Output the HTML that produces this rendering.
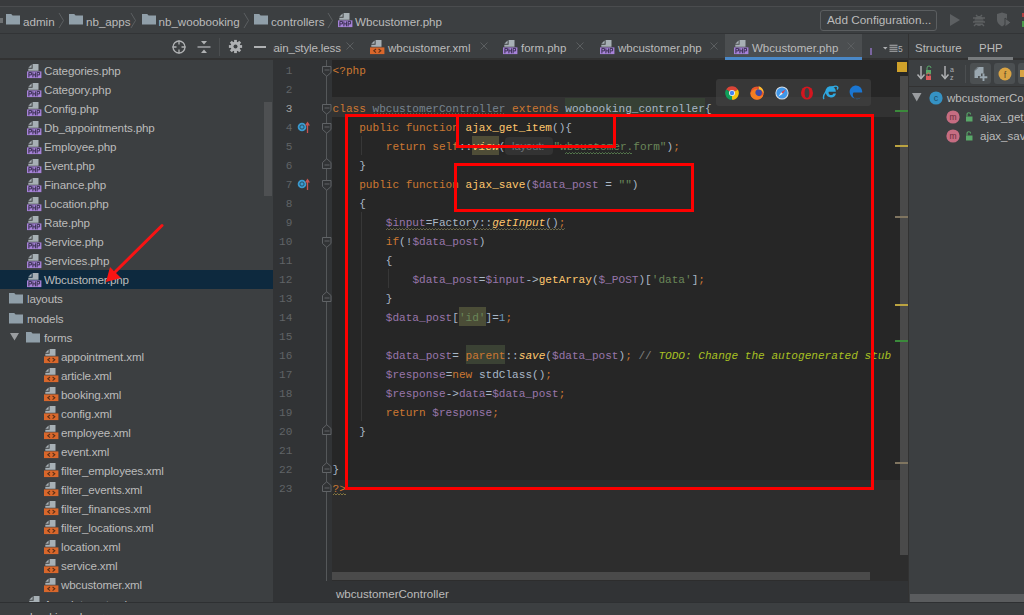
<!DOCTYPE html><html><head><meta charset="utf-8"><style>
html,body{margin:0;padding:0;}body{width:1024px;height:615px;overflow:hidden;position:relative;background:#3c3f41;font-family:"Liberation Sans",sans-serif;}
.r{position:absolute;}
.t{position:absolute;white-space:pre;line-height:19px;height:19px;}
</style></head><body>
<div class="r" style="left:0;top:0;width:1024px;height:6px;background:#393b3d"></div>
<div class="r" style="left:0;top:6px;width:1024px;height:1px;background:#4a4c4e"></div>
<div class="r" style="left:0;top:7px;width:1024px;height:26px;background:#3c3f41"></div>
<div class="r" style="left:0;top:33px;width:1024px;height:1px;background:#323436"></div>
<div class="r" style="left:0;top:18px;width:3px;height:5px;background:#6d7072"></div>
<svg style="position:absolute;left:5.5px;top:14px" width="14" height="12" viewBox="0 0 14 12"><path d="M0 0h5.2l1.4 1.4h7.4v9.1h-14z" fill="#909fa9"/></svg>
<div class="t" style="left:23px;top:12px;font-size:11.6px;color:#bbbbbb">admin</div>
<svg class="r" style="left:58px;top:12px" width="7" height="17" viewBox="0 0 7 17"><path d="M1 1l4.5 7.5l-4.5 7.5" stroke="#5f6264" stroke-width="0.9" fill="none"/></svg>
<svg style="position:absolute;left:68.5px;top:14px" width="14" height="12" viewBox="0 0 14 12"><path d="M0 0h5.2l1.4 1.4h7.4v9.1h-14z" fill="#909fa9"/></svg>
<div class="t" style="left:86px;top:12px;font-size:11.6px;color:#bbbbbb">nb_apps</div>
<svg class="r" style="left:130px;top:12px" width="7" height="17" viewBox="0 0 7 17"><path d="M1 1l4.5 7.5l-4.5 7.5" stroke="#5f6264" stroke-width="0.9" fill="none"/></svg>
<svg style="position:absolute;left:141.5px;top:14px" width="14" height="12" viewBox="0 0 14 12"><path d="M0 0h5.2l1.4 1.4h7.4v9.1h-14z" fill="#909fa9"/></svg>
<div class="t" style="left:158.5px;top:12px;font-size:11.6px;color:#bbbbbb">nb_woobooking</div>
<svg class="r" style="left:243px;top:12px" width="7" height="17" viewBox="0 0 7 17"><path d="M1 1l4.5 7.5l-4.5 7.5" stroke="#5f6264" stroke-width="0.9" fill="none"/></svg>
<svg style="position:absolute;left:254px;top:14px" width="14" height="12" viewBox="0 0 14 12"><path d="M0 0h5.2l1.4 1.4h7.4v9.1h-14z" fill="#909fa9"/></svg>
<div class="t" style="left:271px;top:12px;font-size:11.6px;color:#bbbbbb">controllers</div>
<svg class="r" style="left:327px;top:12px" width="7" height="17" viewBox="0 0 7 17"><path d="M1 1l4.5 7.5l-4.5 7.5" stroke="#5f6264" stroke-width="0.9" fill="none"/></svg>
<svg style="position:absolute;left:338px;top:13px" width="15" height="15" viewBox="0 0 15 15"><path d="M5.6 0H11.5V6.8H1.3V4.7H5.6Z" fill="#a7b0b5"/><path d="M4.6 0.5V3.8H1.3Z" fill="#a7b0b5"/><rect x="0" y="7.4" width="14.4" height="6.7" fill="#a783d9"/><path d="M1.9 13.3V8.4H4.4V10.9H1.9M5.9 8.4V13.3M8.4 8.4V13.3M5.9 10.85H8.4M10.1 13.3V8.4H12.6V10.9H10.1" stroke="#3a2f50" stroke-width="1" fill="none"/></svg>
<div class="t" style="left:355px;top:12px;font-size:11.6px;color:#bbbbbb">Wbcustomer.php</div>
<div class="r" style="left:820px;top:10px;width:115px;height:19px;border:1px solid #5b5e60;border-radius:3px;background:#3c3f41"></div>
<div class="t" style="left:827px;top:11px;font-size:11.8px;color:#bbbbbb">Add Configuration...</div>
<svg class="r" style="left:948px;top:13px" width="14" height="14" viewBox="0 0 14 14"><path d="M2 1l10 6l-10 6z" fill="#5d6062"/></svg>
<svg class="r" style="left:971px;top:12px" width="16" height="16" viewBox="0 0 16 16"><ellipse cx="8" cy="9" rx="4.5" ry="5" fill="#5d6062"/><path d="M2 6h12M2 10h12M3 14l2-2M13 14l-2-2M5 3l1.5 1.5M11 3l-1.5 1.5" stroke="#5d6062" stroke-width="1.4"/><path d="M3.5 8h9M3.5 11h9" stroke="#3c3f41" stroke-width="0.8"/></svg>
<svg class="r" style="left:996px;top:12px" width="16" height="16" viewBox="0 0 16 16"><path d="M1 2l5-1.5l5 1.5v6c0 3-2.5 5-5 6.5c-2.5-1.5-5-3.5-5-6.5z" fill="#5d6062"/><path d="M9 6l6 4.5l-6 4.5z" fill="#5d6062" stroke="#3c3f41" stroke-width="1"/></svg>
<div class="r" style="left:1022px;top:13px;width:2px;height:4px;background:#b04040"></div>
<div class="r" style="left:1022px;top:21px;width:2px;height:6px;background:#4a9a4a"></div>
<div class="r" style="left:0;top:34px;width:1024px;height:24px;background:#3c3f41"></div>
<div class="r" style="left:0;top:58px;width:1024px;height:2px;background:#323232"></div>
<svg class="r" style="left:171px;top:39px" width="16" height="16" viewBox="0 0 16 16"><circle cx="8" cy="8" r="6" stroke="#afb1b3" stroke-width="1.3" fill="none"/><path d="M8 1.5v4M8 10.5v4M1.5 8h4M10.5 8h4" stroke="#afb1b3" stroke-width="1.3"/></svg>
<svg class="r" style="left:196px;top:39px" width="16" height="16" viewBox="0 0 16 16"><path d="M1.5 8h13" stroke="#afb1b3" stroke-width="1.3"/><path d="M5 2h6l-3 3.5z M5 14h6l-3-3.5z" fill="#afb1b3"/></svg>
<div class="r" style="left:219px;top:38px;width:1px;height:18px;background:#4b4e50"></div>
<svg class="r" style="left:228px;top:39px" width="15" height="15" viewBox="-7.5 -7.5 15 15"><g fill="#afb1b3"><rect x="-1.4" y="-6.6" width="2.8" height="13.2"/><rect x="-1.4" y="-6.6" width="2.8" height="13.2" transform="rotate(45)"/><rect x="-1.4" y="-6.6" width="2.8" height="13.2" transform="rotate(90)"/><rect x="-1.4" y="-6.6" width="2.8" height="13.2" transform="rotate(135)"/><circle r="4.8"/></g><circle r="2" fill="#3c3f41"/></svg>
<div class="r" style="left:254px;top:46px;width:12px;height:1.5px;background:#afb1b3"></div>
<div class="r" style="left:273px;top:34px;width:636px;height:24px;background:#3c3f41"></div>
<div class="r" style="left:725px;top:34px;width:137px;height:24px;background:#4b4e50"></div>
<div class="r" style="left:725px;top:57px;width:137px;height:3px;background:#4a88c7"></div>
<div class="t" style="left:273px;top:39px;font-size:11.5px;color:#bbbbbb;width:80px;overflow:hidden;text-indent:-9px;letter-spacing:-0.12px">main_style.less</div>
<svg class="r" style="left:345px;top:41px" width="10" height="10" viewBox="0 0 10 10"><path d="M1.5 1.5l7 7M8.5 1.5l-7 7" stroke="#5b5e60" stroke-width="1"/></svg>
<svg style="position:absolute;left:370px;top:40px" width="15" height="15" viewBox="0 0 15 15"><path d="M5.6 0H11.5V6.8H1.3V4.7H5.6Z" fill="#a7b0b5"/><path d="M4.6 0.5V3.8H1.3Z" fill="#a7b0b5"/><rect x="0" y="7.4" width="14.4" height="6.7" fill="#d9672b"/><path d="M6 9l-2.2 1.8l2.2 1.8M8.6 9l2.2 1.8l-2.2 1.8" stroke="#5a3018" stroke-width="1.1" fill="none"/></svg>
<div class="t" style="left:388px;top:39px;font-size:11.5px;color:#bbbbbb">wbcustomer.xml</div>
<svg class="r" style="left:479px;top:41px" width="10" height="10" viewBox="0 0 10 10"><path d="M1.5 1.5l7 7M8.5 1.5l-7 7" stroke="#5b5e60" stroke-width="1"/></svg>
<svg style="position:absolute;left:503px;top:40px" width="15" height="15" viewBox="0 0 15 15"><path d="M5.6 0H11.5V6.8H1.3V4.7H5.6Z" fill="#a7b0b5"/><path d="M4.6 0.5V3.8H1.3Z" fill="#a7b0b5"/><rect x="0" y="7.4" width="14.4" height="6.7" fill="#a783d9"/><path d="M1.9 13.3V8.4H4.4V10.9H1.9M5.9 8.4V13.3M8.4 8.4V13.3M5.9 10.85H8.4M10.1 13.3V8.4H12.6V10.9H10.1" stroke="#3a2f50" stroke-width="1" fill="none"/></svg>
<div class="t" style="left:521px;top:39px;font-size:11.5px;color:#bbbbbb">form.php</div>
<svg class="r" style="left:575px;top:41px" width="10" height="10" viewBox="0 0 10 10"><path d="M1.5 1.5l7 7M8.5 1.5l-7 7" stroke="#5b5e60" stroke-width="1"/></svg>
<svg style="position:absolute;left:600px;top:40px" width="15" height="15" viewBox="0 0 15 15"><path d="M5.6 0H11.5V6.8H1.3V4.7H5.6Z" fill="#a7b0b5"/><path d="M4.6 0.5V3.8H1.3Z" fill="#a7b0b5"/><rect x="0" y="7.4" width="14.4" height="6.7" fill="#a783d9"/><path d="M1.9 13.3V8.4H4.4V10.9H1.9M5.9 8.4V13.3M8.4 8.4V13.3M5.9 10.85H8.4M10.1 13.3V8.4H12.6V10.9H10.1" stroke="#3a2f50" stroke-width="1" fill="none"/></svg>
<div class="t" style="left:618px;top:39px;font-size:11.5px;color:#bbbbbb">wbcustomer.php</div>
<svg class="r" style="left:709px;top:41px" width="10" height="10" viewBox="0 0 10 10"><path d="M1.5 1.5l7 7M8.5 1.5l-7 7" stroke="#5b5e60" stroke-width="1"/></svg>
<svg style="position:absolute;left:734px;top:40px" width="15" height="15" viewBox="0 0 15 15"><path d="M5.6 0H11.5V6.8H1.3V4.7H5.6Z" fill="#a7b0b5"/><path d="M4.6 0.5V3.8H1.3Z" fill="#a7b0b5"/><rect x="0" y="7.4" width="14.4" height="6.7" fill="#a783d9"/><path d="M1.9 13.3V8.4H4.4V10.9H1.9M5.9 8.4V13.3M8.4 8.4V13.3M5.9 10.85H8.4M10.1 13.3V8.4H12.6V10.9H10.1" stroke="#3a2f50" stroke-width="1" fill="none"/></svg>
<div class="t" style="left:752px;top:39px;font-size:11.5px;color:#bbbbbb">Wbcustomer.php</div>
<svg class="r" style="left:846px;top:41px" width="10" height="10" viewBox="0 0 10 10"><path d="M1.5 1.5l7 7M8.5 1.5l-7 7" stroke="#5b5e60" stroke-width="1"/></svg>
<div class="r" style="left:870px;top:48px;width:2px;height:7px;background:#7a65a0"></div>
<svg class="r" style="left:882px;top:44px" width="16" height="9" viewBox="0 0 16 9"><path d="M1 3h4.5l-2.25 2.6z" fill="#afb1b3"/><path d="M7.5 1.2h8M7.5 3.2h8M7.5 5.2h8M7.5 7.2h8" stroke="#afb1b3" stroke-width="1.1"/></svg>
<div class="t" style="left:898px;top:40px;font-size:8.5px;color:#afb1b3">5</div>
<div class="r" style="left:908px;top:34px;width:1px;height:570px;background:#323232"></div>
<div class="t" style="left:915px;top:39px;font-size:11.5px;color:#bbbbbb">Structure</div>
<div class="t" style="left:979px;top:39px;font-size:11.5px;color:#bbbbbb">PHP</div>
<div class="r" style="left:968px;top:57px;width:45px;height:3px;background:#787b7d"></div>
<div class="r" style="left:0;top:60px;width:273px;height:542px;background:#3c3f41;overflow:hidden">
<div class="r" style="left:0;top:209.94px;width:273px;height:19px;background:#0d293e"></div>
<svg style="position:absolute;left:26.5px;top:3.5px" width="15" height="15" viewBox="0 0 15 15"><path d="M5.6 0H11.5V6.8H1.3V4.7H5.6Z" fill="#a7b0b5"/><path d="M4.6 0.5V3.8H1.3Z" fill="#a7b0b5"/><rect x="0" y="7.4" width="14.4" height="6.7" fill="#a783d9"/><path d="M1.9 13.3V8.4H4.4V10.9H1.9M5.9 8.4V13.3M8.4 8.4V13.3M5.9 10.85H8.4M10.1 13.3V8.4H12.6V10.9H10.1" stroke="#3a2f50" stroke-width="1" fill="none"/></svg>
<div class="t" style="left:44px;top:1.0px;font-size:11.6px;letter-spacing:-0.15px;color:#bbbbbb">Categories.php</div>
<svg style="position:absolute;left:26.5px;top:22.54px" width="15" height="15" viewBox="0 0 15 15"><path d="M5.6 0H11.5V6.8H1.3V4.7H5.6Z" fill="#a7b0b5"/><path d="M4.6 0.5V3.8H1.3Z" fill="#a7b0b5"/><rect x="0" y="7.4" width="14.4" height="6.7" fill="#a783d9"/><path d="M1.9 13.3V8.4H4.4V10.9H1.9M5.9 8.4V13.3M8.4 8.4V13.3M5.9 10.85H8.4M10.1 13.3V8.4H12.6V10.9H10.1" stroke="#3a2f50" stroke-width="1" fill="none"/></svg>
<div class="t" style="left:44px;top:20.04px;font-size:11.6px;letter-spacing:-0.15px;color:#bbbbbb">Category.php</div>
<svg style="position:absolute;left:26.5px;top:41.58px" width="15" height="15" viewBox="0 0 15 15"><path d="M5.6 0H11.5V6.8H1.3V4.7H5.6Z" fill="#a7b0b5"/><path d="M4.6 0.5V3.8H1.3Z" fill="#a7b0b5"/><rect x="0" y="7.4" width="14.4" height="6.7" fill="#a783d9"/><path d="M1.9 13.3V8.4H4.4V10.9H1.9M5.9 8.4V13.3M8.4 8.4V13.3M5.9 10.85H8.4M10.1 13.3V8.4H12.6V10.9H10.1" stroke="#3a2f50" stroke-width="1" fill="none"/></svg>
<div class="t" style="left:44px;top:39.08px;font-size:11.6px;letter-spacing:-0.15px;color:#bbbbbb">Config.php</div>
<svg style="position:absolute;left:26.5px;top:60.62px" width="15" height="15" viewBox="0 0 15 15"><path d="M5.6 0H11.5V6.8H1.3V4.7H5.6Z" fill="#a7b0b5"/><path d="M4.6 0.5V3.8H1.3Z" fill="#a7b0b5"/><rect x="0" y="7.4" width="14.4" height="6.7" fill="#a783d9"/><path d="M1.9 13.3V8.4H4.4V10.9H1.9M5.9 8.4V13.3M8.4 8.4V13.3M5.9 10.85H8.4M10.1 13.3V8.4H12.6V10.9H10.1" stroke="#3a2f50" stroke-width="1" fill="none"/></svg>
<div class="t" style="left:44px;top:58.12px;font-size:11.6px;letter-spacing:-0.15px;color:#bbbbbb">Db_appointments.php</div>
<svg style="position:absolute;left:26.5px;top:79.66px" width="15" height="15" viewBox="0 0 15 15"><path d="M5.6 0H11.5V6.8H1.3V4.7H5.6Z" fill="#a7b0b5"/><path d="M4.6 0.5V3.8H1.3Z" fill="#a7b0b5"/><rect x="0" y="7.4" width="14.4" height="6.7" fill="#a783d9"/><path d="M1.9 13.3V8.4H4.4V10.9H1.9M5.9 8.4V13.3M8.4 8.4V13.3M5.9 10.85H8.4M10.1 13.3V8.4H12.6V10.9H10.1" stroke="#3a2f50" stroke-width="1" fill="none"/></svg>
<div class="t" style="left:44px;top:77.16px;font-size:11.6px;letter-spacing:-0.15px;color:#bbbbbb">Employee.php</div>
<svg style="position:absolute;left:26.5px;top:98.7px" width="15" height="15" viewBox="0 0 15 15"><path d="M5.6 0H11.5V6.8H1.3V4.7H5.6Z" fill="#a7b0b5"/><path d="M4.6 0.5V3.8H1.3Z" fill="#a7b0b5"/><rect x="0" y="7.4" width="14.4" height="6.7" fill="#a783d9"/><path d="M1.9 13.3V8.4H4.4V10.9H1.9M5.9 8.4V13.3M8.4 8.4V13.3M5.9 10.85H8.4M10.1 13.3V8.4H12.6V10.9H10.1" stroke="#3a2f50" stroke-width="1" fill="none"/></svg>
<div class="t" style="left:44px;top:96.2px;font-size:11.6px;letter-spacing:-0.15px;color:#bbbbbb">Event.php</div>
<svg style="position:absolute;left:26.5px;top:117.74px" width="15" height="15" viewBox="0 0 15 15"><path d="M5.6 0H11.5V6.8H1.3V4.7H5.6Z" fill="#a7b0b5"/><path d="M4.6 0.5V3.8H1.3Z" fill="#a7b0b5"/><rect x="0" y="7.4" width="14.4" height="6.7" fill="#a783d9"/><path d="M1.9 13.3V8.4H4.4V10.9H1.9M5.9 8.4V13.3M8.4 8.4V13.3M5.9 10.85H8.4M10.1 13.3V8.4H12.6V10.9H10.1" stroke="#3a2f50" stroke-width="1" fill="none"/></svg>
<div class="t" style="left:44px;top:115.24px;font-size:11.6px;letter-spacing:-0.15px;color:#bbbbbb">Finance.php</div>
<svg style="position:absolute;left:26.5px;top:136.78px" width="15" height="15" viewBox="0 0 15 15"><path d="M5.6 0H11.5V6.8H1.3V4.7H5.6Z" fill="#a7b0b5"/><path d="M4.6 0.5V3.8H1.3Z" fill="#a7b0b5"/><rect x="0" y="7.4" width="14.4" height="6.7" fill="#a783d9"/><path d="M1.9 13.3V8.4H4.4V10.9H1.9M5.9 8.4V13.3M8.4 8.4V13.3M5.9 10.85H8.4M10.1 13.3V8.4H12.6V10.9H10.1" stroke="#3a2f50" stroke-width="1" fill="none"/></svg>
<div class="t" style="left:44px;top:134.28px;font-size:11.6px;letter-spacing:-0.15px;color:#bbbbbb">Location.php</div>
<svg style="position:absolute;left:26.5px;top:155.82px" width="15" height="15" viewBox="0 0 15 15"><path d="M5.6 0H11.5V6.8H1.3V4.7H5.6Z" fill="#a7b0b5"/><path d="M4.6 0.5V3.8H1.3Z" fill="#a7b0b5"/><rect x="0" y="7.4" width="14.4" height="6.7" fill="#a783d9"/><path d="M1.9 13.3V8.4H4.4V10.9H1.9M5.9 8.4V13.3M8.4 8.4V13.3M5.9 10.85H8.4M10.1 13.3V8.4H12.6V10.9H10.1" stroke="#3a2f50" stroke-width="1" fill="none"/></svg>
<div class="t" style="left:44px;top:153.32px;font-size:11.6px;letter-spacing:-0.15px;color:#bbbbbb">Rate.php</div>
<svg style="position:absolute;left:26.5px;top:174.86px" width="15" height="15" viewBox="0 0 15 15"><path d="M5.6 0H11.5V6.8H1.3V4.7H5.6Z" fill="#a7b0b5"/><path d="M4.6 0.5V3.8H1.3Z" fill="#a7b0b5"/><rect x="0" y="7.4" width="14.4" height="6.7" fill="#a783d9"/><path d="M1.9 13.3V8.4H4.4V10.9H1.9M5.9 8.4V13.3M8.4 8.4V13.3M5.9 10.85H8.4M10.1 13.3V8.4H12.6V10.9H10.1" stroke="#3a2f50" stroke-width="1" fill="none"/></svg>
<div class="t" style="left:44px;top:172.36px;font-size:11.6px;letter-spacing:-0.15px;color:#bbbbbb">Service.php</div>
<svg style="position:absolute;left:26.5px;top:193.9px" width="15" height="15" viewBox="0 0 15 15"><path d="M5.6 0H11.5V6.8H1.3V4.7H5.6Z" fill="#a7b0b5"/><path d="M4.6 0.5V3.8H1.3Z" fill="#a7b0b5"/><rect x="0" y="7.4" width="14.4" height="6.7" fill="#a783d9"/><path d="M1.9 13.3V8.4H4.4V10.9H1.9M5.9 8.4V13.3M8.4 8.4V13.3M5.9 10.85H8.4M10.1 13.3V8.4H12.6V10.9H10.1" stroke="#3a2f50" stroke-width="1" fill="none"/></svg>
<div class="t" style="left:44px;top:191.4px;font-size:11.6px;letter-spacing:-0.15px;color:#bbbbbb">Services.php</div>
<svg style="position:absolute;left:26.5px;top:212.94px" width="15" height="15" viewBox="0 0 15 15"><path d="M5.6 0H11.5V6.8H1.3V4.7H5.6Z" fill="#a7b0b5"/><path d="M4.6 0.5V3.8H1.3Z" fill="#a7b0b5"/><rect x="0" y="7.4" width="14.4" height="6.7" fill="#a783d9"/><path d="M1.9 13.3V8.4H4.4V10.9H1.9M5.9 8.4V13.3M8.4 8.4V13.3M5.9 10.85H8.4M10.1 13.3V8.4H12.6V10.9H10.1" stroke="#3a2f50" stroke-width="1" fill="none"/></svg>
<div class="t" style="left:44px;top:210.44px;font-size:11.6px;letter-spacing:-0.15px;color:#bbbbbb">Wbcustomer.php</div>
<svg style="position:absolute;left:9px;top:233.48px" width="14" height="12" viewBox="0 0 14 12"><path d="M0 0h5.2l1.4 1.4h7.4v9.1h-14z" fill="#909fa9"/></svg>
<div class="t" style="left:27px;top:229.48px;font-size:11.6px;letter-spacing:-0.15px;color:#bbbbbb">layouts</div>
<svg style="position:absolute;left:9px;top:252.52px" width="14" height="12" viewBox="0 0 14 12"><path d="M0 0h5.2l1.4 1.4h7.4v9.1h-14z" fill="#909fa9"/></svg>
<div class="t" style="left:27px;top:248.52px;font-size:11.6px;letter-spacing:-0.15px;color:#bbbbbb">models</div>
<svg class="r" style="left:9.5px;top:272.56px" width="9" height="8" viewBox="0 0 9 8"><path d="M0 0h9l-4.5 7.5z" fill="#9a9da0"/></svg>
<svg style="position:absolute;left:26px;top:271.56px" width="14" height="12" viewBox="0 0 14 12"><path d="M0 0h5.2l1.4 1.4h7.4v9.1h-14z" fill="#909fa9"/></svg>
<div class="t" style="left:44px;top:267.56px;font-size:11.6px;letter-spacing:-0.15px;color:#bbbbbb">forms</div>
<svg style="position:absolute;left:43.5px;top:289.1px" width="15" height="15" viewBox="0 0 15 15"><path d="M5.6 0H11.5V6.8H1.3V4.7H5.6Z" fill="#a7b0b5"/><path d="M4.6 0.5V3.8H1.3Z" fill="#a7b0b5"/><rect x="0" y="7.4" width="14.4" height="6.7" fill="#d9672b"/><path d="M6 9l-2.2 1.8l2.2 1.8M8.6 9l2.2 1.8l-2.2 1.8" stroke="#5a3018" stroke-width="1.1" fill="none"/></svg>
<div class="t" style="left:61px;top:286.6px;font-size:11.6px;letter-spacing:-0.15px;color:#bbbbbb">appointment.xml</div>
<svg style="position:absolute;left:43.5px;top:308.14px" width="15" height="15" viewBox="0 0 15 15"><path d="M5.6 0H11.5V6.8H1.3V4.7H5.6Z" fill="#a7b0b5"/><path d="M4.6 0.5V3.8H1.3Z" fill="#a7b0b5"/><rect x="0" y="7.4" width="14.4" height="6.7" fill="#d9672b"/><path d="M6 9l-2.2 1.8l2.2 1.8M8.6 9l2.2 1.8l-2.2 1.8" stroke="#5a3018" stroke-width="1.1" fill="none"/></svg>
<div class="t" style="left:61px;top:305.64px;font-size:11.6px;letter-spacing:-0.15px;color:#bbbbbb">article.xml</div>
<svg style="position:absolute;left:43.5px;top:327.18px" width="15" height="15" viewBox="0 0 15 15"><path d="M5.6 0H11.5V6.8H1.3V4.7H5.6Z" fill="#a7b0b5"/><path d="M4.6 0.5V3.8H1.3Z" fill="#a7b0b5"/><rect x="0" y="7.4" width="14.4" height="6.7" fill="#d9672b"/><path d="M6 9l-2.2 1.8l2.2 1.8M8.6 9l2.2 1.8l-2.2 1.8" stroke="#5a3018" stroke-width="1.1" fill="none"/></svg>
<div class="t" style="left:61px;top:324.68px;font-size:11.6px;letter-spacing:-0.15px;color:#bbbbbb">booking.xml</div>
<svg style="position:absolute;left:43.5px;top:346.22px" width="15" height="15" viewBox="0 0 15 15"><path d="M5.6 0H11.5V6.8H1.3V4.7H5.6Z" fill="#a7b0b5"/><path d="M4.6 0.5V3.8H1.3Z" fill="#a7b0b5"/><rect x="0" y="7.4" width="14.4" height="6.7" fill="#d9672b"/><path d="M6 9l-2.2 1.8l2.2 1.8M8.6 9l2.2 1.8l-2.2 1.8" stroke="#5a3018" stroke-width="1.1" fill="none"/></svg>
<div class="t" style="left:61px;top:343.72px;font-size:11.6px;letter-spacing:-0.15px;color:#bbbbbb">config.xml</div>
<svg style="position:absolute;left:43.5px;top:365.26px" width="15" height="15" viewBox="0 0 15 15"><path d="M5.6 0H11.5V6.8H1.3V4.7H5.6Z" fill="#a7b0b5"/><path d="M4.6 0.5V3.8H1.3Z" fill="#a7b0b5"/><rect x="0" y="7.4" width="14.4" height="6.7" fill="#d9672b"/><path d="M6 9l-2.2 1.8l2.2 1.8M8.6 9l2.2 1.8l-2.2 1.8" stroke="#5a3018" stroke-width="1.1" fill="none"/></svg>
<div class="t" style="left:61px;top:362.76px;font-size:11.6px;letter-spacing:-0.15px;color:#bbbbbb">employee.xml</div>
<svg style="position:absolute;left:43.5px;top:384.3px" width="15" height="15" viewBox="0 0 15 15"><path d="M5.6 0H11.5V6.8H1.3V4.7H5.6Z" fill="#a7b0b5"/><path d="M4.6 0.5V3.8H1.3Z" fill="#a7b0b5"/><rect x="0" y="7.4" width="14.4" height="6.7" fill="#d9672b"/><path d="M6 9l-2.2 1.8l2.2 1.8M8.6 9l2.2 1.8l-2.2 1.8" stroke="#5a3018" stroke-width="1.1" fill="none"/></svg>
<div class="t" style="left:61px;top:381.8px;font-size:11.6px;letter-spacing:-0.15px;color:#bbbbbb">event.xml</div>
<svg style="position:absolute;left:43.5px;top:403.34px" width="15" height="15" viewBox="0 0 15 15"><path d="M5.6 0H11.5V6.8H1.3V4.7H5.6Z" fill="#a7b0b5"/><path d="M4.6 0.5V3.8H1.3Z" fill="#a7b0b5"/><rect x="0" y="7.4" width="14.4" height="6.7" fill="#d9672b"/><path d="M6 9l-2.2 1.8l2.2 1.8M8.6 9l2.2 1.8l-2.2 1.8" stroke="#5a3018" stroke-width="1.1" fill="none"/></svg>
<div class="t" style="left:61px;top:400.84px;font-size:11.6px;letter-spacing:-0.15px;color:#bbbbbb">filter_employees.xml</div>
<svg style="position:absolute;left:43.5px;top:422.38px" width="15" height="15" viewBox="0 0 15 15"><path d="M5.6 0H11.5V6.8H1.3V4.7H5.6Z" fill="#a7b0b5"/><path d="M4.6 0.5V3.8H1.3Z" fill="#a7b0b5"/><rect x="0" y="7.4" width="14.4" height="6.7" fill="#d9672b"/><path d="M6 9l-2.2 1.8l2.2 1.8M8.6 9l2.2 1.8l-2.2 1.8" stroke="#5a3018" stroke-width="1.1" fill="none"/></svg>
<div class="t" style="left:61px;top:419.88px;font-size:11.6px;letter-spacing:-0.15px;color:#bbbbbb">filter_events.xml</div>
<svg style="position:absolute;left:43.5px;top:441.42px" width="15" height="15" viewBox="0 0 15 15"><path d="M5.6 0H11.5V6.8H1.3V4.7H5.6Z" fill="#a7b0b5"/><path d="M4.6 0.5V3.8H1.3Z" fill="#a7b0b5"/><rect x="0" y="7.4" width="14.4" height="6.7" fill="#d9672b"/><path d="M6 9l-2.2 1.8l2.2 1.8M8.6 9l2.2 1.8l-2.2 1.8" stroke="#5a3018" stroke-width="1.1" fill="none"/></svg>
<div class="t" style="left:61px;top:438.92px;font-size:11.6px;letter-spacing:-0.15px;color:#bbbbbb">filter_finances.xml</div>
<svg style="position:absolute;left:43.5px;top:460.46px" width="15" height="15" viewBox="0 0 15 15"><path d="M5.6 0H11.5V6.8H1.3V4.7H5.6Z" fill="#a7b0b5"/><path d="M4.6 0.5V3.8H1.3Z" fill="#a7b0b5"/><rect x="0" y="7.4" width="14.4" height="6.7" fill="#d9672b"/><path d="M6 9l-2.2 1.8l2.2 1.8M8.6 9l2.2 1.8l-2.2 1.8" stroke="#5a3018" stroke-width="1.1" fill="none"/></svg>
<div class="t" style="left:61px;top:457.96px;font-size:11.6px;letter-spacing:-0.15px;color:#bbbbbb">filter_locations.xml</div>
<svg style="position:absolute;left:43.5px;top:479.5px" width="15" height="15" viewBox="0 0 15 15"><path d="M5.6 0H11.5V6.8H1.3V4.7H5.6Z" fill="#a7b0b5"/><path d="M4.6 0.5V3.8H1.3Z" fill="#a7b0b5"/><rect x="0" y="7.4" width="14.4" height="6.7" fill="#d9672b"/><path d="M6 9l-2.2 1.8l2.2 1.8M8.6 9l2.2 1.8l-2.2 1.8" stroke="#5a3018" stroke-width="1.1" fill="none"/></svg>
<div class="t" style="left:61px;top:477.0px;font-size:11.6px;letter-spacing:-0.15px;color:#bbbbbb">location.xml</div>
<svg style="position:absolute;left:43.5px;top:498.54px" width="15" height="15" viewBox="0 0 15 15"><path d="M5.6 0H11.5V6.8H1.3V4.7H5.6Z" fill="#a7b0b5"/><path d="M4.6 0.5V3.8H1.3Z" fill="#a7b0b5"/><rect x="0" y="7.4" width="14.4" height="6.7" fill="#d9672b"/><path d="M6 9l-2.2 1.8l2.2 1.8M8.6 9l2.2 1.8l-2.2 1.8" stroke="#5a3018" stroke-width="1.1" fill="none"/></svg>
<div class="t" style="left:61px;top:496.04px;font-size:11.6px;letter-spacing:-0.15px;color:#bbbbbb">service.xml</div>
<svg style="position:absolute;left:43.5px;top:517.58px" width="15" height="15" viewBox="0 0 15 15"><path d="M5.6 0H11.5V6.8H1.3V4.7H5.6Z" fill="#a7b0b5"/><path d="M4.6 0.5V3.8H1.3Z" fill="#a7b0b5"/><rect x="0" y="7.4" width="14.4" height="6.7" fill="#d9672b"/><path d="M6 9l-2.2 1.8l2.2 1.8M8.6 9l2.2 1.8l-2.2 1.8" stroke="#5a3018" stroke-width="1.1" fill="none"/></svg>
<div class="t" style="left:61px;top:515.08px;font-size:11.6px;letter-spacing:-0.15px;color:#bbbbbb">wbcustomer.xml</div>
<svg style="position:absolute;left:27.5px;top:536.12px" width="15" height="15" viewBox="0 0 15 15"><path d="M5.6 0H11.5V6.8H1.3V4.7H5.6Z" fill="#a7b0b5"/><path d="M4.6 0.5V3.8H1.3Z" fill="#a7b0b5"/><rect x="0" y="7.4" width="14.4" height="6.7" fill="#a783d9"/><path d="M1.9 13.3V8.4H4.4V10.9H1.9M5.9 8.4V13.3M8.4 8.4V13.3M5.9 10.85H8.4M10.1 13.3V8.4H12.6V10.9H10.1" stroke="#3a2f50" stroke-width="1" fill="none"/></svg>
<div class="t" style="left:44px;top:535.12px;font-size:11.6px;color:#bbbbbb">Appointments.php</div>
<div class="r" style="left:264px;top:42px;width:8px;height:94px;background:#4e5052"></div>
</div>
<div class="r" style="left:273px;top:60px;width:635px;height:521px;background:#262626;overflow:hidden">
<div class="r" style="left:0;top:0;width:59px;height:521px;background:#313335"></div>
<div class="r" style="left:59px;top:420px;width:576px;height:101px;background:#2d2d2d"></div>
<div class="r" style="left:59px;top:37px;width:568px;height:20px;background:#323232"></div>
<div class="r" style="left:53px;top:0;width:1px;height:521px;background:#55585a"></div>
<div class="r" style="left:199.25px;top:76px;width:26.60px;height:19px;background:#4f4d37"></div>
<div class="r" style="left:231.8px;top:77px;width:48px;height:18px;border-radius:4px;background:#333333"></div>
<div class="r" style="left:239px;top:77px;font:11px 'Liberation Sans', sans-serif;line-height:18px;color:#6e7478">layout:</div>
<div class="r" style="left:185.95px;top:247px;width:26.60px;height:19px;background:#4b4d37"></div>
<div class="r" style="left:192.60px;top:285px;width:39.90px;height:19px;background:#3b4234"></div>
<div class="r" style="left:292.35px;top:38px;width:139.65px;height:16px;background:#364034"></div>
<div class="r" style="left:88.2px;top:76px;width:1px;height:19px;background:#373737"></div>
<div class="r" style="left:114.8px;top:209px;width:1px;height:19px;background:#373737"></div>
<div class="r" style="left:88.2px;top:152px;width:1px;height:209px;background:#373737"></div>
<div class="t" style="left:59.6px;top:2px;font:11.08px 'Liberation Mono', monospace;line-height:19px"><span style="color:#cc7832;">&lt;?php</span></div>
<div class="t" style="left:59.6px;top:40px;font:11.08px 'Liberation Mono', monospace;line-height:19px"><span style="color:#cc7832;">class </span><span style="color:#77838e;">wbcustomerController</span><span style="color:#cc7832;"> extends </span><span style="color:#a9b7c6;">woobooking_controller</span><span style="color:#a9b7c6;">{</span></div>
<div class="t" style="left:59.6px;top:59px;font:11.08px 'Liberation Mono', monospace;line-height:19px"><span style="color:#cc7832;">    public function </span><span style="color:#ffc66d;">ajax_get_item</span><span style="color:#a9b7c6;">(){</span></div>
<div class="t" style="left:59.6px;top:78px;font:11.08px 'Liberation Mono', monospace;line-height:19px"><span style="color:#cc7832;">        return </span><span style="color:#cc7832;">self</span><span style="color:#a9b7c6;">::</span><span style="color:#ffc66d;font-style:italic;">view</span><span style="color:#a9b7c6;">(</span><span style="color:#a9b7c6;"><span style="display:inline-block;width:48px"></span></span><span style="color:#6a8759;">"wbcustomer.form"</span><span style="color:#a9b7c6;">)</span><span style="color:#cc7832;">;</span></div>
<div class="t" style="left:59.6px;top:97px;font:11.08px 'Liberation Mono', monospace;line-height:19px"><span style="color:#a9b7c6;">    }</span></div>
<div class="t" style="left:59.6px;top:116px;font:11.08px 'Liberation Mono', monospace;line-height:19px"><span style="color:#cc7832;">    public function </span><span style="color:#ffc66d;">ajax_save</span><span style="color:#a9b7c6;">(</span><span style="color:#9876aa;">$data_post</span><span style="color:#a9b7c6;"> = </span><span style="color:#6a8759;">""</span><span style="color:#a9b7c6;">)</span></div>
<div class="t" style="left:59.6px;top:135px;font:11.08px 'Liberation Mono', monospace;line-height:19px"><span style="color:#a9b7c6;">    {</span></div>
<div class="t" style="left:59.6px;top:154px;font:11.08px 'Liberation Mono', monospace;line-height:19px"><span style="color:#a9b7c6;">        </span><span style="color:#9876aa;">$input</span><span style="color:#a9b7c6;">=</span><span style="color:#a9b7c6;">Factory</span><span style="color:#a9b7c6;">::</span><span style="color:#ffc66d;font-style:italic;">getInput</span><span style="color:#a9b7c6;">()</span><span style="color:#cc7832;">;</span></div>
<div class="t" style="left:59.6px;top:173px;font:11.08px 'Liberation Mono', monospace;line-height:19px"><span style="color:#cc7832;">        if</span><span style="color:#a9b7c6;">(!</span><span style="color:#9876aa;">$data_post</span><span style="color:#a9b7c6;">)</span></div>
<div class="t" style="left:59.6px;top:192px;font:11.08px 'Liberation Mono', monospace;line-height:19px"><span style="color:#a9b7c6;">        {</span></div>
<div class="t" style="left:59.6px;top:211px;font:11.08px 'Liberation Mono', monospace;line-height:19px"><span style="color:#a9b7c6;">            </span><span style="color:#9876aa;">$data_post</span><span style="color:#a9b7c6;">=</span><span style="color:#9876aa;">$input</span><span style="color:#a9b7c6;">-&gt;</span><span style="color:#ffc66d;">getArray</span><span style="color:#a9b7c6;">(</span><span style="color:#9876aa;">$_POST</span><span style="color:#a9b7c6;">)[</span><span style="color:#6a8759;">'data'</span><span style="color:#a9b7c6;">]</span><span style="color:#cc7832;">;</span></div>
<div class="t" style="left:59.6px;top:230px;font:11.08px 'Liberation Mono', monospace;line-height:19px"><span style="color:#a9b7c6;">        }</span></div>
<div class="t" style="left:59.6px;top:249px;font:11.08px 'Liberation Mono', monospace;line-height:19px"><span style="color:#a9b7c6;">        </span><span style="color:#9876aa;">$data_post</span><span style="color:#a9b7c6;">[</span><span style="color:#6a8759;">'id'</span><span style="color:#a9b7c6;">]=</span><span style="color:#6897bb;">1</span><span style="color:#cc7832;">;</span></div>
<div class="t" style="left:59.6px;top:287px;font:11.08px 'Liberation Mono', monospace;line-height:19px"><span style="color:#a9b7c6;">        </span><span style="color:#9876aa;">$data_post</span><span style="color:#a9b7c6;">= </span><span style="color:#cc7832;">parent</span><span style="color:#a9b7c6;">::</span><span style="color:#ffc66d;font-style:italic;">save</span><span style="color:#a9b7c6;">(</span><span style="color:#9876aa;">$data_post</span><span style="color:#a9b7c6;">)</span><span style="color:#cc7832;">;</span><span style="color:#808080;"> // </span><span style="color:#a8c023;font-style:italic;">TODO: Change the autogenerated stub</span></div>
<div class="t" style="left:59.6px;top:306px;font:11.08px 'Liberation Mono', monospace;line-height:19px"><span style="color:#a9b7c6;">        </span><span style="color:#9876aa;">$response</span><span style="color:#a9b7c6;">=</span><span style="color:#cc7832;">new </span><span style="color:#a9b7c6;">stdClass</span><span style="color:#a9b7c6;">()</span><span style="color:#cc7832;">;</span></div>
<div class="t" style="left:59.6px;top:325px;font:11.08px 'Liberation Mono', monospace;line-height:19px"><span style="color:#a9b7c6;">        </span><span style="color:#9876aa;">$response</span><span style="color:#a9b7c6;">-&gt;</span><span style="color:#9876aa;">data</span><span style="color:#a9b7c6;">=</span><span style="color:#9876aa;">$data_post</span><span style="color:#cc7832;">;</span></div>
<div class="t" style="left:59.6px;top:344px;font:11.08px 'Liberation Mono', monospace;line-height:19px"><span style="color:#cc7832;">        return </span><span style="color:#9876aa;">$response</span><span style="color:#cc7832;">;</span></div>
<div class="t" style="left:59.6px;top:363px;font:11.08px 'Liberation Mono', monospace;line-height:19px"><span style="color:#a9b7c6;">    }</span></div>
<div class="t" style="left:59.6px;top:401px;font:11.08px 'Liberation Mono', monospace;line-height:19px"><span style="color:#a9b7c6;">}</span></div>
<div class="t" style="left:59.6px;top:420px;font:11.08px 'Liberation Mono', monospace;line-height:19px"><span style="color:#cc7832;">?&gt;</span></div>
<svg class="r" style="left:99.5px;top:53px" width="133.0" height="3" viewBox="0 0 133.0 3"><path d="M0 2 l1.5 -1.5 l1.5 1.5 l1.5 -1.5 l1.5 1.5 l1.5 -1.5 l1.5 1.5 l1.5 -1.5 l1.5 1.5 l1.5 -1.5 l1.5 1.5 l1.5 -1.5 l1.5 1.5 l1.5 -1.5 l1.5 1.5 l1.5 -1.5 l1.5 1.5 l1.5 -1.5 l1.5 1.5 l1.5 -1.5 l1.5 1.5 l1.5 -1.5 l1.5 1.5 l1.5 -1.5 l1.5 1.5 l1.5 -1.5 l1.5 1.5 l1.5 -1.5 l1.5 1.5 l1.5 -1.5 l1.5 1.5 l1.5 -1.5 l1.5 1.5 l1.5 -1.5 l1.5 1.5 l1.5 -1.5 l1.5 1.5 l1.5 -1.5 l1.5 1.5 l1.5 -1.5 l1.5 1.5 l1.5 -1.5 l1.5 1.5 l1.5 -1.5 l1.5 1.5 l1.5 -1.5 l1.5 1.5 l1.5 -1.5 l1.5 1.5 l1.5 -1.5 l1.5 1.5 l1.5 -1.5 l1.5 1.5 l1.5 -1.5 l1.5 1.5 l1.5 -1.5 l1.5 1.5 l1.5 -1.5 l1.5 1.5 l1.5 -1.5 l1.5 1.5 l1.5 -1.5 l1.5 1.5 l1.5 -1.5 l1.5 1.5 l1.5 -1.5 l1.5 1.5 l1.5 -1.5 l1.5 1.5 l1.5 -1.5 l1.5 1.5 l1.5 -1.5 l1.5 1.5 l1.5 -1.5 l1.5 1.5 l1.5 -1.5 l1.5 1.5 l1.5 -1.5 l1.5 1.5 l1.5 -1.5 l1.5 1.5 l1.5 -1.5 l1.5 1.5 l1.5 -1.5 l1.5 1.5 l1.5 -1.5 l1.5 1.5 l1.5 -1.5 l1.5 1.5 l1.5 -1.5 l1.5 1.5" stroke="#5f8a55" stroke-width="0.8" fill="none"/></svg>
<svg class="r" style="left:292.35px;top:92px" width="66.5" height="3" viewBox="0 0 66.5 3"><path d="M0 2 l1.5 -1.5 l1.5 1.5 l1.5 -1.5 l1.5 1.5 l1.5 -1.5 l1.5 1.5 l1.5 -1.5 l1.5 1.5 l1.5 -1.5 l1.5 1.5 l1.5 -1.5 l1.5 1.5 l1.5 -1.5 l1.5 1.5 l1.5 -1.5 l1.5 1.5 l1.5 -1.5 l1.5 1.5 l1.5 -1.5 l1.5 1.5 l1.5 -1.5 l1.5 1.5 l1.5 -1.5 l1.5 1.5 l1.5 -1.5 l1.5 1.5 l1.5 -1.5 l1.5 1.5 l1.5 -1.5 l1.5 1.5 l1.5 -1.5 l1.5 1.5 l1.5 -1.5 l1.5 1.5 l1.5 -1.5 l1.5 1.5 l1.5 -1.5 l1.5 1.5 l1.5 -1.5 l1.5 1.5 l1.5 -1.5 l1.5 1.5 l1.5 -1.5 l1.5 1.5 l1.5 -1.5 l1.5 1.5" stroke="#5f8a55" stroke-width="0.8" fill="none"/></svg>
<svg class="r" style="left:112.80000000000001px;top:168px" width="179.55" height="3" viewBox="0 0 179.55 3"><path d="M0 2 l1.5 -1.5 l1.5 1.5 l1.5 -1.5 l1.5 1.5 l1.5 -1.5 l1.5 1.5 l1.5 -1.5 l1.5 1.5 l1.5 -1.5 l1.5 1.5 l1.5 -1.5 l1.5 1.5 l1.5 -1.5 l1.5 1.5 l1.5 -1.5 l1.5 1.5 l1.5 -1.5 l1.5 1.5 l1.5 -1.5 l1.5 1.5 l1.5 -1.5 l1.5 1.5 l1.5 -1.5 l1.5 1.5 l1.5 -1.5 l1.5 1.5 l1.5 -1.5 l1.5 1.5 l1.5 -1.5 l1.5 1.5 l1.5 -1.5 l1.5 1.5 l1.5 -1.5 l1.5 1.5 l1.5 -1.5 l1.5 1.5 l1.5 -1.5 l1.5 1.5 l1.5 -1.5 l1.5 1.5 l1.5 -1.5 l1.5 1.5 l1.5 -1.5 l1.5 1.5 l1.5 -1.5 l1.5 1.5 l1.5 -1.5 l1.5 1.5 l1.5 -1.5 l1.5 1.5 l1.5 -1.5 l1.5 1.5 l1.5 -1.5 l1.5 1.5 l1.5 -1.5 l1.5 1.5 l1.5 -1.5 l1.5 1.5 l1.5 -1.5 l1.5 1.5 l1.5 -1.5 l1.5 1.5 l1.5 -1.5 l1.5 1.5 l1.5 -1.5 l1.5 1.5 l1.5 -1.5 l1.5 1.5 l1.5 -1.5 l1.5 1.5 l1.5 -1.5 l1.5 1.5 l1.5 -1.5 l1.5 1.5 l1.5 -1.5 l1.5 1.5 l1.5 -1.5 l1.5 1.5 l1.5 -1.5 l1.5 1.5 l1.5 -1.5 l1.5 1.5 l1.5 -1.5 l1.5 1.5 l1.5 -1.5 l1.5 1.5 l1.5 -1.5 l1.5 1.5 l1.5 -1.5 l1.5 1.5 l1.5 -1.5 l1.5 1.5 l1.5 -1.5 l1.5 1.5 l1.5 -1.5 l1.5 1.5 l1.5 -1.5 l1.5 1.5 l1.5 -1.5 l1.5 1.5 l1.5 -1.5 l1.5 1.5 l1.5 -1.5 l1.5 1.5 l1.5 -1.5 l1.5 1.5 l1.5 -1.5 l1.5 1.5 l1.5 -1.5 l1.5 1.5 l1.5 -1.5 l1.5 1.5 l1.5 -1.5 l1.5 1.5 l1.5 -1.5 l1.5 1.5 l1.5 -1.5 l1.5 1.5 l1.5 -1.5 l1.5 1.5" stroke="#7d7a55" stroke-width="0.8" fill="none"/></svg>
<svg class="r" style="left:59.6px;top:433px" width="13.300000000000004" height="3" viewBox="0 0 13.300000000000004 3"><path d="M0 2 l1.5 -1.5 l1.5 1.5 l1.5 -1.5 l1.5 1.5 l1.5 -1.5 l1.5 1.5 l1.5 -1.5 l1.5 1.5 l1.5 -1.5 l1.5 1.5" stroke="#9a8a48" stroke-width="0.8" fill="none"/></svg>
<div class="t" style="left:0;width:19.3px;text-align:right;top:2px;font:11.08px 'Liberation Mono', monospace;line-height:19px;color:#606366">1</div>
<div class="t" style="left:0;width:19.3px;text-align:right;top:21px;font:11.08px 'Liberation Mono', monospace;line-height:19px;color:#606366">2</div>
<div class="t" style="left:0;width:19.3px;text-align:right;top:40px;font:11.08px 'Liberation Mono', monospace;line-height:19px;color:#a4a3a3">3</div>
<div class="t" style="left:0;width:19.3px;text-align:right;top:59px;font:11.08px 'Liberation Mono', monospace;line-height:19px;color:#606366">4</div>
<div class="t" style="left:0;width:19.3px;text-align:right;top:78px;font:11.08px 'Liberation Mono', monospace;line-height:19px;color:#606366">5</div>
<div class="t" style="left:0;width:19.3px;text-align:right;top:97px;font:11.08px 'Liberation Mono', monospace;line-height:19px;color:#606366">6</div>
<div class="t" style="left:0;width:19.3px;text-align:right;top:116px;font:11.08px 'Liberation Mono', monospace;line-height:19px;color:#606366">7</div>
<div class="t" style="left:0;width:19.3px;text-align:right;top:135px;font:11.08px 'Liberation Mono', monospace;line-height:19px;color:#606366">8</div>
<div class="t" style="left:0;width:19.3px;text-align:right;top:154px;font:11.08px 'Liberation Mono', monospace;line-height:19px;color:#606366">9</div>
<div class="t" style="left:0;width:19.3px;text-align:right;top:173px;font:11.08px 'Liberation Mono', monospace;line-height:19px;color:#606366">10</div>
<div class="t" style="left:0;width:19.3px;text-align:right;top:192px;font:11.08px 'Liberation Mono', monospace;line-height:19px;color:#606366">11</div>
<div class="t" style="left:0;width:19.3px;text-align:right;top:211px;font:11.08px 'Liberation Mono', monospace;line-height:19px;color:#606366">12</div>
<div class="t" style="left:0;width:19.3px;text-align:right;top:230px;font:11.08px 'Liberation Mono', monospace;line-height:19px;color:#606366">13</div>
<div class="t" style="left:0;width:19.3px;text-align:right;top:249px;font:11.08px 'Liberation Mono', monospace;line-height:19px;color:#606366">14</div>
<div class="t" style="left:0;width:19.3px;text-align:right;top:268px;font:11.08px 'Liberation Mono', monospace;line-height:19px;color:#606366">15</div>
<div class="t" style="left:0;width:19.3px;text-align:right;top:287px;font:11.08px 'Liberation Mono', monospace;line-height:19px;color:#606366">16</div>
<div class="t" style="left:0;width:19.3px;text-align:right;top:306px;font:11.08px 'Liberation Mono', monospace;line-height:19px;color:#606366">17</div>
<div class="t" style="left:0;width:19.3px;text-align:right;top:325px;font:11.08px 'Liberation Mono', monospace;line-height:19px;color:#606366">18</div>
<div class="t" style="left:0;width:19.3px;text-align:right;top:344px;font:11.08px 'Liberation Mono', monospace;line-height:19px;color:#606366">19</div>
<div class="t" style="left:0;width:19.3px;text-align:right;top:363px;font:11.08px 'Liberation Mono', monospace;line-height:19px;color:#606366">20</div>
<div class="t" style="left:0;width:19.3px;text-align:right;top:382px;font:11.08px 'Liberation Mono', monospace;line-height:19px;color:#606366">21</div>
<div class="t" style="left:0;width:19.3px;text-align:right;top:401px;font:11.08px 'Liberation Mono', monospace;line-height:19px;color:#606366">22</div>
<div class="t" style="left:0;width:19.3px;text-align:right;top:420px;font:11.08px 'Liberation Mono', monospace;line-height:19px;color:#606366">23</div>
<svg class="r" style="left:49px;top:6px" width="10" height="11" viewBox="0 0 10 11"><path d="M0.5 0.5h8.5v6l-4.25 3.8l-4.25-3.8z" fill="#313335" stroke="#606366" stroke-width="1"/><path d="M2.5 4h5" stroke="#606366" stroke-width="1"/></svg>
<svg class="r" style="left:49px;top:44px" width="10" height="11" viewBox="0 0 10 11"><path d="M0.5 0.5h8.5v6l-4.25 3.8l-4.25-3.8z" fill="#313335" stroke="#606366" stroke-width="1"/><path d="M2.5 4h5" stroke="#606366" stroke-width="1"/></svg>
<svg class="r" style="left:49px;top:63px" width="10" height="11" viewBox="0 0 10 11"><path d="M0.5 0.5h8.5v6l-4.25 3.8l-4.25-3.8z" fill="#313335" stroke="#606366" stroke-width="1"/><path d="M2.5 4h5" stroke="#606366" stroke-width="1"/></svg>
<svg class="r" style="left:49px;top:120px" width="10" height="11" viewBox="0 0 10 11"><path d="M0.5 0.5h8.5v6l-4.25 3.8l-4.25-3.8z" fill="#313335" stroke="#606366" stroke-width="1"/><path d="M2.5 4h5" stroke="#606366" stroke-width="1"/></svg>
<svg class="r" style="left:49px;top:177px" width="10" height="11" viewBox="0 0 10 11"><path d="M0.5 0.5h8.5v6l-4.25 3.8l-4.25-3.8z" fill="#313335" stroke="#606366" stroke-width="1"/><path d="M2.5 4h5" stroke="#606366" stroke-width="1"/></svg>
<svg class="r" style="left:49px;top:98px" width="10" height="11" viewBox="0 0 10 11"><path d="M0.5 10.5h8.5v-6l-4.25-3.8l-4.25 3.8z" fill="#313335" stroke="#606366" stroke-width="1"/><path d="M2.5 7h5" stroke="#606366" stroke-width="1"/></svg>
<svg class="r" style="left:49px;top:231px" width="10" height="11" viewBox="0 0 10 11"><path d="M0.5 10.5h8.5v-6l-4.25-3.8l-4.25 3.8z" fill="#313335" stroke="#606366" stroke-width="1"/><path d="M2.5 7h5" stroke="#606366" stroke-width="1"/></svg>
<svg class="r" style="left:49px;top:364px" width="10" height="11" viewBox="0 0 10 11"><path d="M0.5 10.5h8.5v-6l-4.25-3.8l-4.25 3.8z" fill="#313335" stroke="#606366" stroke-width="1"/><path d="M2.5 7h5" stroke="#606366" stroke-width="1"/></svg>
<svg class="r" style="left:49px;top:402px" width="10" height="11" viewBox="0 0 10 11"><path d="M0.5 10.5h8.5v-6l-4.25-3.8l-4.25 3.8z" fill="#313335" stroke="#606366" stroke-width="1"/><path d="M2.5 7h5" stroke="#606366" stroke-width="1"/></svg>
<svg class="r" style="left:49px;top:421px" width="10" height="11" viewBox="0 0 10 11"><path d="M0.5 10.5h8.5v-6l-4.25-3.8l-4.25 3.8z" fill="#313335" stroke="#606366" stroke-width="1"/><path d="M2.5 7h5" stroke="#606366" stroke-width="1"/></svg>
<svg class="r" style="left:24px;top:60px" width="16" height="14" viewBox="0 0 16 14"><circle cx="5" cy="7" r="4.3" fill="#3b9bd0"/><circle cx="5" cy="7" r="2.1" fill="none" stroke="#24465a" stroke-width="0.9"/><path d="M10.5 13v-10" stroke="#c75450" stroke-width="1.3"/><path d="M8 5.5l2.5-4l2.5 4z" fill="#c75450"/></svg>
<svg class="r" style="left:24px;top:117px" width="16" height="14" viewBox="0 0 16 14"><circle cx="5" cy="7" r="4.3" fill="#3b9bd0"/><circle cx="5" cy="7" r="2.1" fill="none" stroke="#24465a" stroke-width="0.9"/><path d="M10.5 13v-10" stroke="#c75450" stroke-width="1.3"/><path d="M8 5.5l2.5-4l2.5 4z" fill="#c75450"/></svg>
<div class="r" style="left:624px;top:2px;width:10px;height:10px;background:#cfa12a"></div>
<div class="r" style="left:627px;top:16px;width:8px;height:479px;background:#4a4a4a"></div>
<div class="r" style="left:622px;top:50px;width:13px;height:2px;background:#3b8a3b"></div>
<div class="r" style="left:622px;top:85px;width:13px;height:2px;background:#bba341"></div>
<div class="r" style="left:622px;top:156px;width:13px;height:2px;background:#807560"></div>
<div class="r" style="left:622px;top:244px;width:13px;height:2px;background:#bba341"></div>
<div class="r" style="left:622px;top:280px;width:13px;height:2px;background:#3b8a3b"></div>
<div class="r" style="left:622px;top:402px;width:13px;height:2px;background:#807560"></div>
<div class="r" style="left:59px;top:512px;width:538px;height:8px;background:#4a4a4a"></div>
<div class="r" style="left:443px;top:19px;width:155px;height:27px;border-radius:3px;background:rgba(70,70,70,0.55)"></div>
</div>
<svg class="r" style="left:724px;top:85px" width="16" height="16" viewBox="-8 -8 16 16"><path d="M0 0L-5.9 -3.4A6.8 6.8 0 0 1 5.9 -3.4z" fill="#db4437"/><path d="M0 0L5.9 -3.4A6.8 6.8 0 0 1 0 6.8z" fill="#f4c20d"/><path d="M0 0L0 6.8A6.8 6.8 0 0 1 -5.9 -3.4z" fill="#0f9d58"/><circle r="3" fill="#f1f1f1"/><circle r="2.2" fill="#4285f4"/></svg>
<svg class="r" style="left:749px;top:85px" width="16" height="16" viewBox="-8 -8 16 16"><circle r="6.6" fill="#e8542b"/><circle cx="1.2" cy="-0.6" r="3.7" fill="#3d4aa8"/><path d="M-6.6 0A6.6 6.6 0 0 0 6.6 0.3C5.8 2.8 3.2 3.6 1 3C-1.5 2.3-2.2-0.5-1.2-2.2C-0.5-3.2 0.5-3.6 1.2-3.6C-1.5-4.5-4.5-3.8-6.6 0z" fill="#f47d22"/><path d="M1.2 -6.8C5.2 -6.2 7.2 -2.5 6.5 1C6-1.8 4.2-3.8 1.2-3.6C2.5-4.5 2.2-6 1.2-6.8z" fill="#ffbd2e"/></svg>
<svg class="r" style="left:774px;top:85px" width="16" height="16" viewBox="-8 -8 16 16"><circle r="6.6" fill="#d8dde3"/><circle r="5.6" fill="#3f97ea"/><path d="M3.5 -3.5L0.8 0.8L-0.8 -0.8z" fill="#f23b3b"/><path d="M-3.5 3.5L-0.8 -0.8L0.8 0.8z" fill="#f2f2f2"/></svg>
<svg class="r" style="left:799px;top:85px" width="16" height="16" viewBox="-8 -8 16 16"><ellipse rx="6" ry="6.6" fill="#d4161f"/><ellipse rx="2.4" ry="4.9" fill="#3f3f3f"/></svg>
<svg class="r" style="left:822px;top:85px" width="18" height="16" viewBox="-9 -8 18 16"><path d="M-5 0.8A5.2 5.2 0 1 1 4.8 -1.2H-2.2A2.4 2.4 0 0 0 2.4 0.4H5A5.2 5.2 0 0 1 -5 0.8z" fill="#2fa8e0"/><path d="M-2.2 -2.2A2.3 2.3 0 0 1 2.3 -2.2z" fill="#2fa8e0"/><path d="M-7 6C-9 3 -4 -5 3 -6.5C6-7.5 8-6 6-3.5" stroke="#2fa8e0" stroke-width="1.4" fill="none"/></svg>
<svg class="r" style="left:848px;top:85px" width="16" height="16" viewBox="-8 -8 16 16"><path d="M-6 1A6.3 6.3 0 1 1 6.2 -0.5H-2.5A2.8 2.8 0 0 0 4.8 4.2C2 7-4 6.5-6 1z" fill="#1a76d2"/><path d="M-2.4 -2.4A2.6 2.6 0 0 1 2.6 -2.4z" fill="#1a76d2"/></svg>
<div class="r" style="left:345px;top:114px;width:523px;height:370px;border:3px solid #fe0000"></div>
<div class="r" style="left:456px;top:114px;width:154px;height:28px;border:3px solid #fe0000"></div>
<div class="r" style="left:454px;top:163px;width:234px;height:43px;border:3px solid #fe0000"></div>
<svg class="r" style="left:0;top:0" width="273" height="300" viewBox="0 0 273 300"><path d="M162 225.5L113 274" stroke="#f81414" stroke-width="3" stroke-linecap="round"/><path d="M106 282L110 267L121 278z" fill="#f81414"/></svg>
<div class="r" style="left:273px;top:581px;width:635px;height:22px;background:#313335"></div>
<div class="t" style="left:336px;top:584px;font-size:11.6px;color:#bbbbbb">wbcustomerController</div>
<div class="r" style="left:909px;top:60px;width:115px;height:543px;background:#3c3f41"></div>
<div class="r" style="left:909px;top:86px;width:115px;height:1px;background:#323232"></div>
<svg class="r" style="left:916px;top:64px" width="18" height="18" viewBox="0 0 18 18"><path d="M5 2v12" stroke="#afb1b3" stroke-width="1.5"/><path d="M1.5 10.5l3.5 4l3.5-4" stroke="#afb1b3" stroke-width="1.5" fill="none"/><rect x="10" y="6" width="5" height="4" fill="#59a869"/><path d="M11 6v-2a2 2 0 0 1 4 0" stroke="#59a869" stroke-width="1" fill="none"/><rect x="10" y="12" width="5" height="4" fill="#db5c5c"/><path d="M11 12v-1.5a1.5 1.5 0 0 1 3 0v1.5" stroke="#db5c5c" stroke-width="1" fill="none"/></svg>
<svg class="r" style="left:940px;top:64px" width="18" height="18" viewBox="0 0 18 18"><path d="M5 2v12" stroke="#afb1b3" stroke-width="1.5"/><path d="M1.5 10.5l3.5 4l3.5-4" stroke="#afb1b3" stroke-width="1.5" fill="none"/><text x="10" y="8" font-family="Liberation Sans" font-size="7" fill="#afb1b3">a</text><text x="10" y="16" font-family="Liberation Sans" font-size="7" fill="#afb1b3">z</text></svg>
<div class="r" style="left:965px;top:65px;width:1px;height:18px;background:#4b4e50"></div>
<div class="r" style="left:970px;top:63px;width:21px;height:21px;border-radius:3px;background:#4c5052"></div>
<svg class="r" style="left:973px;top:66px" width="16" height="16" viewBox="0 0 16 16"><path d="M4.5 1h6v6.5h-2.5v2.5h-3v2h-3.5v-8z" fill="#9aa7b0"/><path d="M1.8 4.6L5 1.4" stroke="#4c5052" stroke-width="0.9"/><path d="M10.5 7.5v7.5M6.8 11.2h7.5" stroke="#9aa7b0" stroke-width="1.9"/></svg>
<div class="r" style="left:994px;top:63px;width:21px;height:21px;border-radius:3px;background:#4c5052"></div>
<svg class="r" style="left:997px;top:66px" width="16" height="16" viewBox="0 0 16 16"><circle cx="8" cy="8" r="6.5" fill="#d9a343"/><text x="8" y="11.5" font-family="Liberation Sans" font-size="9" fill="#5a4a2a" text-anchor="middle">f</text></svg>
<div class="r" style="left:1018px;top:63px;width:6px;height:21px;border-radius:3px 0 0 3px;background:#4c5052"></div>
<div class="r" style="left:1020px;top:70px;width:4px;height:7px;background:#d9a343"></div>
<svg class="r" style="left:912px;top:93px" width="10" height="9" viewBox="0 0 10 9"><path d="M0 0h9.5l-4.75 8.5z" fill="#9a9da0"/></svg>
<svg class="r" style="left:929px;top:91px" width="14" height="14" viewBox="0 0 14 14"><circle cx="7" cy="7" r="6.6" fill="#3592c4"/><text x="7" y="10.3" font-family="Liberation Sans" font-size="9" fill="#1f4e6a" text-anchor="middle">c</text></svg>
<div class="t" style="left:947px;top:89px;font-size:11.5px;color:#bbbbbb">wbcustomerController</div>
<svg class="r" style="left:946px;top:110px" width="14" height="14" viewBox="0 0 14 14"><circle cx="7" cy="7" r="6.6" fill="#c66d82"/><text x="7" y="10" font-family="Liberation Sans" font-size="8.5" fill="#6a2c3a" text-anchor="middle">m</text></svg>
<svg class="r" style="left:964px;top:112px" width="10" height="10" viewBox="0 0 10 10"><rect x="2" y="4.5" width="6.5" height="5" fill="#59a869"/><path d="M3 4.5v-2a1.8 1.8 0 0 1 3.6 0" stroke="#59a869" stroke-width="1.1" fill="none"/></svg>
<div class="t" style="left:980px;top:108px;font-size:11.5px;color:#bbbbbb">ajax_get_item</div>
<svg class="r" style="left:946px;top:129px" width="14" height="14" viewBox="0 0 14 14"><circle cx="7" cy="7" r="6.6" fill="#c66d82"/><text x="7" y="10" font-family="Liberation Sans" font-size="8.5" fill="#6a2c3a" text-anchor="middle">m</text></svg>
<svg class="r" style="left:964px;top:131px" width="10" height="10" viewBox="0 0 10 10"><rect x="2" y="4.5" width="6.5" height="5" fill="#59a869"/><path d="M3 4.5v-2a1.8 1.8 0 0 1 3.6 0" stroke="#59a869" stroke-width="1.1" fill="none"/></svg>
<div class="t" style="left:980px;top:127px;font-size:11.5px;color:#bbbbbb">ajax_save</div>
<div class="r" style="left:910px;top:594px;width:114px;height:8px;background:#5a5c5e"></div>
<div class="r" style="left:0;top:602px;width:1024px;height:1px;background:#2e3032"></div>
<div class="r" style="left:0;top:603px;width:1024px;height:12px;background:#3c3f41;overflow:hidden">
<div class="t" style="left:30px;top:5px;font-size:11.5px;color:#bbbbbb">booking.php   ×</div>
</div>
</body></html>
